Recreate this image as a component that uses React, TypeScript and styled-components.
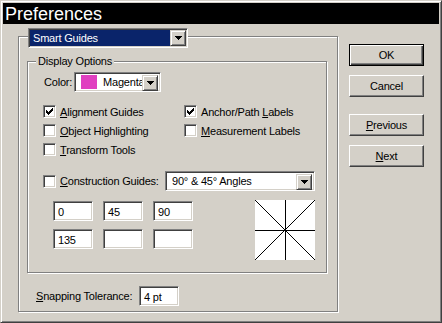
import React from 'react';
import styled, { createGlobalStyle } from 'styled-components';

const GlobalStyle = createGlobalStyle`
  html, body {
    margin: 0;
    padding: 0;
    background: #d4d0c8;
  }
  * {
    box-sizing: border-box;
  }
`;

const Window = styled.div`
  width: 442px;
  height: 323px;
  padding: 2px;
  background: #d4d0c8;
  border: 1px solid;
  border-color: #d4d0c8 #404040 #404040 #d4d0c8;
  box-shadow: inset 1px 1px #fff, inset -1px -1px #808080;
  font-family: "Liberation Sans", Arial, sans-serif;
  font-size: 11px;
  letter-spacing: -0.2px;
  color: #000;
`;

const TitleBar = styled.div`
  height: 21px;
  background: #000;
  color: #fff;
  font-size: 18px;
  letter-spacing: 0;
  line-height: 20px;
  padding: 1px 0 0 2px;
  white-space: nowrap;
`;

const Body = styled.div`
  display: flex;
  align-items: flex-start;
  padding-left: 15px;
`;

const GroupBox = styled.div<{ $w: number; $h: number }>`
  width: ${p => p.$w}px;
  height: ${p => p.$h}px;
  border: 1px solid #808080;
  box-shadow: inset 1px 1px #fff, 1px 1px #fff;
  display: flex;
  flex-direction: column;
  align-items: flex-start;
`;

const MainGroup = styled(GroupBox)`
  margin-top: 12px;
`;

const InnerGroup = styled(GroupBox)`
  margin: 13px 0 0 8px;
`;

const GroupLabel = styled.div`
  margin: -7px 0 0 8px;
  padding: 0 2px;
  height: 13px;
  line-height: 13px;
  background: #d4d0c8;
  white-space: nowrap;
`;

const Sunken = styled.div<{ $w: number }>`
  width: ${p => p.$w}px;
  height: 20px;
  background: #fff;
  border: 1px solid;
  border-color: #808080 #fff #fff #808080;
  box-shadow: inset 1px 1px #404040, inset -1px -1px #d4d0c8;
  padding: 2px;
  display: flex;
  align-items: stretch;
  overflow: hidden;
`;

const GroupCombo = styled(Sunken)`
  margin: -9px 0 0 9px;
  padding: 1px;
`;

const ComboValue = styled.div<{ $selected?: boolean }>`
  flex: 1;
  min-width: 0;
  display: flex;
  align-items: center;
  gap: 6px;
  padding-left: ${p => (p.$selected ? 3 : 4)}px;
  background: ${p => (p.$selected ? '#0a246a' : '#fff')};
  color: ${p => (p.$selected ? '#fff' : '#000')};
  white-space: nowrap;
  overflow: hidden;
  line-height: 16px;
`;

const Swatch = styled.div<{ $color: string }>`
  flex: none;
  width: 16px;
  height: 14px;
  background: ${p => p.$color};
`;

const ArrowButton = styled.div`
  flex: none;
  width: 16px;
  height: 16px;
  background: #d4d0c8;
  border: 1px solid;
  border-color: #d4d0c8 #404040 #404040 #d4d0c8;
  box-shadow: inset 1px 1px #fff, inset -1px -1px #808080;
  display: flex;
  align-items: center;
  justify-content: center;
`;

const ColorRow = styled.div`
  display: flex;
  align-items: center;
  height: 20px;
  margin: 4px 0 0 16px;
`;

const FieldLabel = styled.div<{ $w: number }>`
  width: ${p => p.$w}px;
  flex: none;
  white-space: nowrap;
`;

const CheckGrid = styled.div`
  display: grid;
  grid-template-columns: 141px auto;
  grid-auto-rows: 19px;
  margin: 10px 0 0 15px;
`;

const CheckItem = styled.label`
  display: flex;
  align-items: center;
  gap: 4px;
  white-space: nowrap;
`;

const Box = styled.div`
  flex: none;
  width: 13px;
  height: 13px;
  background: #fff;
  border: 1px solid;
  border-color: #808080 #fff #fff #808080;
  box-shadow: inset 1px 1px #404040, inset -1px -1px #d4d0c8;
  display: flex;
  align-items: center;
  justify-content: center;
`;

const ConstructionRow = styled.div`
  display: flex;
  align-items: center;
  height: 20px;
  margin: 12px 0 0 15px;
`;

const ConstructionLabel = styled(CheckItem)`
  width: 122px;
`;

const AnglesArea = styled.div`
  display: flex;
  align-items: flex-start;
  margin: 9px 0 0 25px;
`;

const AngleGrid = styled.div`
  display: grid;
  grid-template-columns: repeat(3, 40px);
  grid-auto-rows: 20px;
  column-gap: 10px;
  row-gap: 8px;
  margin-top: 1px;
`;

const TextField = styled(Sunken)`
  line-height: 16px;
  padding-left: 4px;
  white-space: nowrap;
`;

const Preview = styled.svg`
  display: block;
  margin-left: 62px;
  background: #fff;
`;

const SnapRow = styled.div`
  display: flex;
  align-items: center;
  margin: 13px 0 0 17px;
`;

const ButtonColumn = styled.div`
  display: flex;
  flex-direction: column;
  margin: 20px 0 0 11px;
`;

const Button = styled.div<{ $default?: boolean; $gap: number }>`
  width: 75px;
  height: 22px;
  margin-top: ${p => p.$gap}px;
  display: flex;
  align-items: center;
  justify-content: center;
  background: #d4d0c8;
  border: 1px solid;
  border-color: ${p => (p.$default ? '#000' : '#fff #404040 #404040 #fff')};
  box-shadow: ${p =>
    p.$default
      ? 'inset 1px 1px #fff, inset -1px -1px #404040, inset -2px -2px #808080'
      : 'inset -1px -1px #808080'};
`;

const Arrow = () => (
  <svg width="7" height="4" viewBox="0 0 7 4">
    <path d="M0 0h7v1H0zM1 1h5v1H1zM2 2h3v1H2zM3 3h1v1H3z" fill="#000" />
  </svg>
);

const Check = () => (
  <svg width="7" height="7" viewBox="0 0 7 7">
    <path
      d="M6 0h1v1H6zM5 1h2v1H5zM0 2h1v1H0zM4 2h3v1H4zM0 3h2v1H0zM3 3h3v1H3zM0 4h5v1H0zM1 5h3v1H1zM2 6h1v1H2z"
      fill="#000"
    />
  </svg>
);

type CheckProps = { checked?: boolean; children: React.ReactNode };

const CheckBox = ({ checked, children }: CheckProps) => (
  <CheckItem>
    <Box>{checked && <Check />}</Box>
    <span>{children}</span>
  </CheckItem>
);

const angles = ['0', '45', '90', '135', '', ''];

const App = () => {
  return (
    <>
      <GlobalStyle />
      <Window>
        <TitleBar>Preferences</TitleBar>
        <Body>
          <MainGroup $w={320} $h={276}>
            <GroupCombo $w={160}>
              <ComboValue $selected>Smart Guides</ComboValue>
              <ArrowButton><Arrow /></ArrowButton>
            </GroupCombo>

            <InnerGroup $w={300} $h={212}>
              <GroupLabel>Display Options</GroupLabel>

              <ColorRow>
                <FieldLabel $w={30}>Color:</FieldLabel>
                <Sunken $w={87}>
                  <ComboValue>
                    <Swatch $color="#e040c0" />
                    Magenta
                  </ComboValue>
                  <ArrowButton><Arrow /></ArrowButton>
                </Sunken>
              </ColorRow>

              <CheckGrid>
                <CheckBox checked><u>A</u>lignment Guides</CheckBox>
                <CheckBox checked>Anchor/Path <u>L</u>abels</CheckBox>
                <CheckBox><u>O</u>bject Highlighting</CheckBox>
                <CheckBox><u>M</u>easurement Labels</CheckBox>
                <CheckBox><u>T</u>ransform Tools</CheckBox>
              </CheckGrid>

              <ConstructionRow>
                <ConstructionLabel>
                  <Box />
                  <span><u>C</u>onstruction Guides:</span>
                </ConstructionLabel>
                <Sunken $w={150}>
                  <ComboValue>90° &amp; 45° Angles</ComboValue>
                  <ArrowButton><Arrow /></ArrowButton>
                </Sunken>
              </ConstructionRow>

              <AnglesArea>
                <AngleGrid>
                  {angles.map((a, i) => (
                    <TextField key={i} $w={40}>{a}</TextField>
                  ))}
                </AngleGrid>
                <Preview width="60" height="60" viewBox="0 0 60 60" shapeRendering="crispEdges">
                  <line x1="30.5" y1="0" x2="30.5" y2="60" stroke="#000" />
                  <line x1="0" y1="30.5" x2="60" y2="30.5" stroke="#000" />
                  <line x1="0" y1="0" x2="60" y2="60" stroke="#000" />
                  <line x1="60" y1="0" x2="0" y2="60" stroke="#000" />
                </Preview>
              </AnglesArea>
            </InnerGroup>

            <SnapRow>
              <FieldLabel $w={103}><u>S</u>napping Tolerance:</FieldLabel>
              <TextField $w={40}>4 pt</TextField>
            </SnapRow>
          </MainGroup>

          <ButtonColumn>
            <Button $default $gap={0}>OK</Button>
            <Button $gap={9}>Cancel</Button>
            <Button $gap={17}><span><u>P</u>revious</span></Button>
            <Button $gap={9}><span><u>N</u>ext</span></Button>
          </ButtonColumn>
        </Body>
      </Window>
    </>
  );
};

export default App;
